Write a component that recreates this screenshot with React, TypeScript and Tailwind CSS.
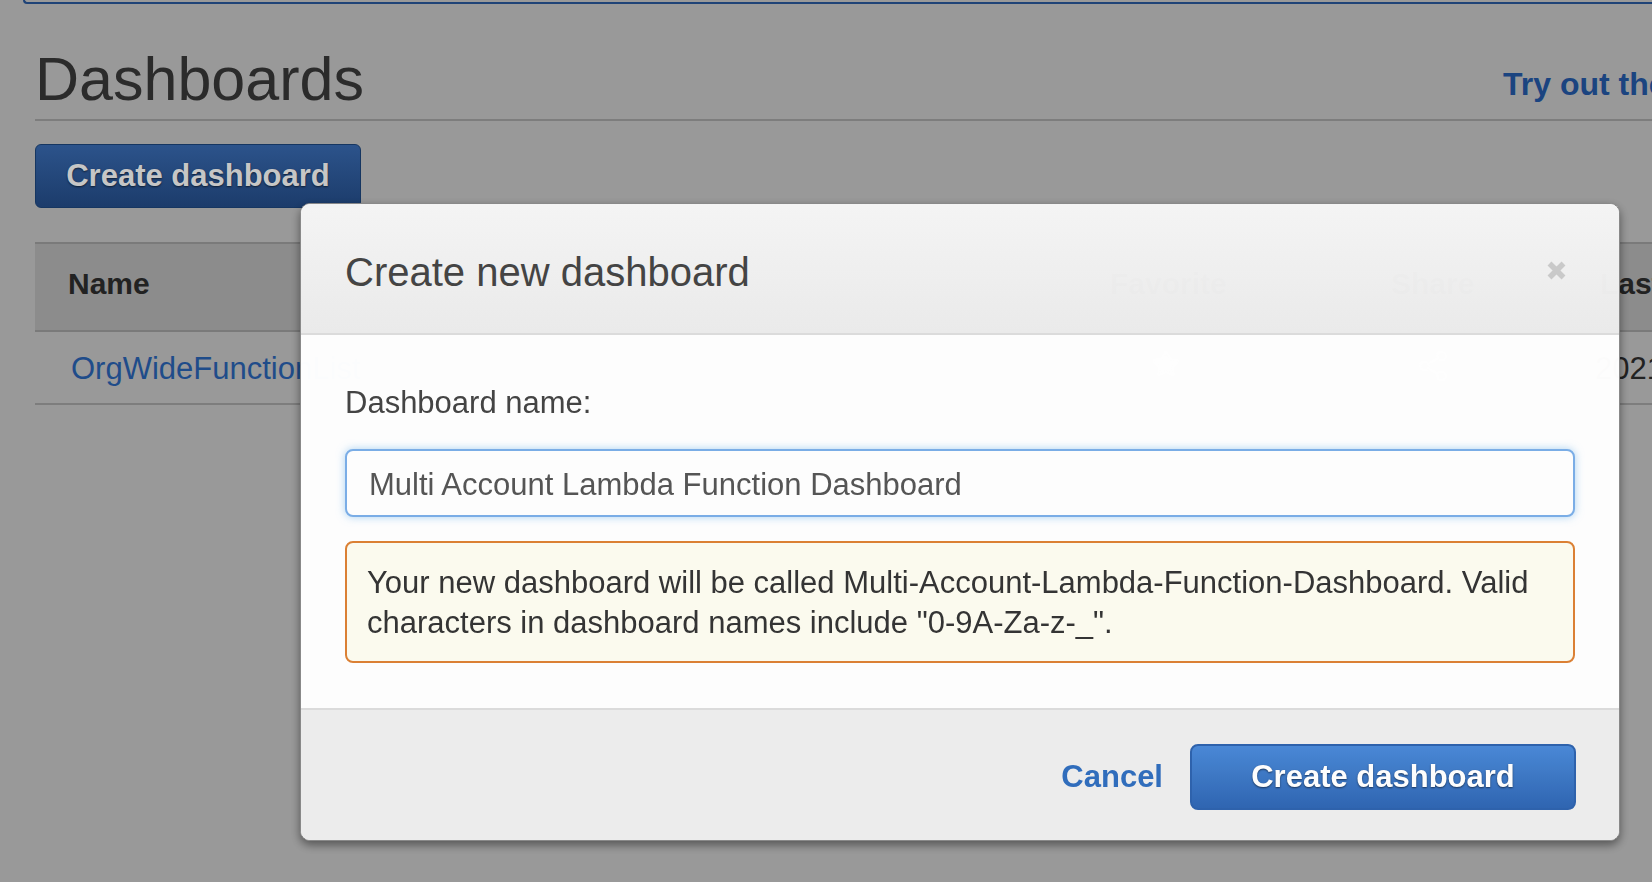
import type { FC } from "react";
import { Star, Share2 } from "lucide-react";

const CloseIcon: FC = () => (
  <svg width="21" height="21" viewBox="0 0 21 21" className="block">
    <path d="M3.5 3.5L17.5 17.5M17.5 3.5L3.5 17.5" stroke="#cbcbcb" strokeWidth="5.5" strokeLinecap="butt" />
  </svg>
);

const DashboardsTable: FC = () => (
  <div className="mt-[34px] w-[1900px]">
    <div className="grid grid-cols-[1042px_281px_209px_1fr] h-[90px] border-t-2 border-b-2 border-[#7a7a7a] bg-[#8c8c8c] pt-[25px] text-[30px] leading-none font-bold text-[#222]">
      <div className="pl-[33px]">Name</div>
      <div className="pl-[33px]">Favorite</div>
      <div className="pl-[33px]">Share</div>
      <div className="pl-[33px]">Last updated (UTC)</div>
    </div>
    <div className="grid grid-cols-[1042px_281px_209px_1fr] h-[73px] border-b-2 border-[#7d7d7d] pt-[21px] text-[31px] leading-none text-[#222]">
      <div className="pl-[36px] text-[#1f4c8a]">OrgWideFunctionList</div>
      <div className="pl-[74px] -mt-[4px]">
        <Star size={30} fill="#9a9a9a" stroke="#9a9a9a" />
      </div>
      <div className="pl-[58px] -mt-[4px]">
        <Share2 size={34} stroke="#9a9a9a" />
      </div>
      <div className="pl-[28px]">2021-03-18 12:40:07</div>
    </div>
  </div>
);

const CreateDashboardModal: FC = () => (
  <div className="absolute left-[300px] top-[203px] w-[1320px] h-[638px] flex flex-col overflow-hidden rounded-[10px] border border-[#8a8a8a] bg-white opacity-[0.985] shadow-[0_4px_10px_rgba(0,0,0,0.45)]">
    <div className="h-[131px] shrink-0 flex items-start justify-between pl-[44px] pr-[52px] pt-[48px] border-b-2 border-[#dddddd] bg-gradient-to-b from-[#f6f6f6] to-[#ececec]">
      <h2 className="text-[40px] leading-none font-normal text-[#444]">Create new dashboard</h2>
      <button className="mt-[8px]">
        <CloseIcon />
      </button>
    </div>

    <div className="flex-1 px-[44px] pt-[48px]">
      <label className="block text-[31px] leading-[40px] text-[#444]">Dashboard name:</label>
      <input
        type="text"
        readOnly
        value="Multi Account Lambda Function Dashboard"
        className="mt-[26px] block w-full h-[68px] rounded-[8px] border-2 border-[#7aaee8] bg-white px-[22px] pt-[4px] text-[31px] text-[#555] outline-none shadow-[0_0_9px_rgba(102,175,233,0.55)]"
      />
      <div className="mt-[24px] rounded-[8px] border-2 border-[#dd8133] bg-[#fdfcf0] px-[20px] pt-[20px] pb-[18px] text-[31px] leading-[40px] text-[#333]">
        Your new dashboard will be called Multi-Account-Lambda-Function-Dashboard. Valid characters in dashboard names include "0-9A-Za-z-_".
      </div>
    </div>

    <div className="h-[132px] shrink-0 flex items-start justify-end gap-[27px] pt-[34px] pr-[43px] border-t-2 border-[#dddddd] bg-[#eeeeee]">
      <a className="h-[66px] flex items-center text-[31px] font-bold text-[#2f6dbd]">Cancel</a>
      <button className="w-[386px] h-[66px] rounded-[8px] border-2 border-[#2d62ad] bg-gradient-to-b from-[#4a89d8] to-[#2e65b2] text-[31px] font-bold text-white [text-shadow:0_1px_2px_rgba(0,0,0,0.55)]">
        Create dashboard
      </button>
    </div>
  </div>
);

export default function App() {
  return (
    <div className="relative w-[1652px] h-[882px] overflow-hidden bg-[#999999] font-['Liberation_Sans',Arial,sans-serif]">
      <div className="h-[4px] ml-[23px] border-l-2 border-b-2 border-[#1f4377] rounded-bl-[8px]" />

      <div className="pl-[35px]">
        <div className="flex items-start mt-[45px] pb-[9px] border-b-2 border-[#7d7d7d]">
          <h1 className="flex-1 text-[61px] leading-none font-normal text-[#2b2b2b]">Dashboards</h1>
          <a className="w-[149px] shrink-0 mt-[19px] whitespace-nowrap text-[32px] leading-none font-bold text-[#1b4480]">
            Try out the new dashboards
          </a>
        </div>

        <button className="mt-[23px] w-[326px] h-[64px] rounded-[6px] border border-[#163661] bg-gradient-to-b from-[#2c538b] to-[#1c3c6b] text-[31px] font-bold text-[#c6c6c6] [text-shadow:0_1px_2px_rgba(0,0,0,0.6)]">
          Create dashboard
        </button>

        <DashboardsTable />
      </div>

      <CreateDashboardModal />
    </div>
  );
}
